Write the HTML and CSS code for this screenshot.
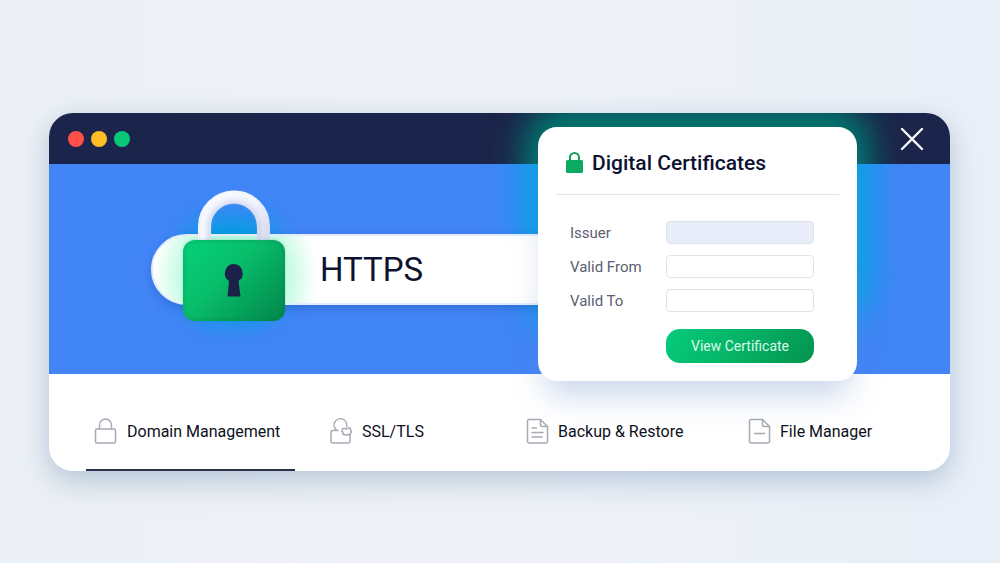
FILE: index.html
```html
<!DOCTYPE html>
<html lang="en">
<head>
    <meta charset="UTF-8">
    <meta name="viewport" content="width=device-width, initial-scale=1.0">
    <title>Digital Certificates</title>
    <link rel="stylesheet" href="styles.css">
</head>
<body>
    <main class="window">
        <header class="titlebar">
            <div class="dots">
                <span class="dot red"></span>
                <span class="dot yellow"></span>
                <span class="dot green"></span>
            </div>
            <button type="button" class="close" aria-label="Close">
                <svg width="26" height="26" viewBox="0 0 26 26" fill="none" stroke="#fff" stroke-width="2.4" stroke-linecap="round">
                    <path d="M3 3l20 20M23 3L3 23"/>
                </svg>
            </button>
        </header>

        <section class="hero">
            <div class="address">
                <input type="text" class="address-input" value="HTTPS" aria-label="Address" readonly>
                <svg class="padlock" width="104" height="132" viewBox="0 0 104 132">
                    <defs>
                        <linearGradient id="body" x1="0" y1="0.1" x2="1" y2="0.9">
                            <stop offset="0" stop-color="#05cf78"/>
                            <stop offset="0.4" stop-color="#08bf6b"/>
                            <stop offset="1" stop-color="#028a4d"/>
                        </linearGradient>
                        <linearGradient id="shackle" x1="0" y1="0" x2="1" y2="1">
                            <stop offset="0" stop-color="#f3f6ff"/>
                            <stop offset="0.6" stop-color="#e8ecfa"/>
                            <stop offset="1" stop-color="#d3d8ec"/>
                        </linearGradient>
                        <filter id="soft" x="-20%" y="-20%" width="140%" height="140%">
                            <feGaussianBlur stdDeviation="1.5"/>
                        </filter>
                    </defs>
                    <path d="M22.500 56V36.500a29.500 29.500 0 0 1 59 0V56" fill="none" stroke="url(#shackle)" stroke-width="13"/>
                    <path d="M27 52V37a25 25 0 0 1 50 0v15" fill="none" stroke="#b9c1de" stroke-width="2" opacity="0.6" filter="url(#soft)"/>
                    <path d="M20 54V36.500a32 32 0 0 1 56-22" fill="none" stroke="#fff" stroke-width="3" opacity="0.7" filter="url(#soft)"/>
                    <rect x="1" y="50" width="102" height="81" rx="12" fill="url(#body)"/>
                    <rect x="2" y="51" width="100" height="79" rx="11" fill="none" stroke="#046c43" stroke-width="1.500" opacity="0.35" filter="url(#soft)"/>
                    <path d="M13 51.500h78" stroke="#3fe59c" stroke-width="1.500" opacity="0.6" filter="url(#soft)"/>
                    <path d="M51.500 74a9.300 9.300 0 0 1 5 17l2 15.500H45.500L47 91a9.300 9.300 0 0 1 4.500-17z" fill="#1b2148"/>
                </svg>
            </div>
        </section>

        <nav class="tabs">
            <a href="#" class="tab active">
                <svg class="icon" viewBox="0 0 24 26">
                    <rect x="1.500" y="11" width="20" height="14" rx="1.500"/>
                    <path d="M5.500 11V7a6 6 0 0 1 12 0v4"/>
                </svg>
                Domain Management
            </a>
            <a href="#" class="tab">
                <svg class="icon" viewBox="0 0 24 26">
                    <path d="M9 12.500H3.500a1.500 1.500 0 0 0-1.500 1.500v9.500A1.500 1.500 0 0 0 3.500 25h16a1.500 1.500 0 0 0 1.500-1.500V17"/>
                    <path d="M7.500 12a6.300 6.300 0 1 1 10-3.500"/>
                    <path d="M14 10.500h2.500q1 1.500 2-.5h3v2.500q2 1 0 2.500v1.500h-3q-1 1.500-2.500 0H14V14q-2 0-1-1.500z"/>
                </svg>
                SSL/TLS
            </a>
            <a href="#" class="tab">
                <svg class="icon" viewBox="0 0 24 26">
                    <path d="M15.500 1.500H4A1.500 1.500 0 0 0 2.500 3v20.500A1.500 1.500 0 0 0 4 25h17a1.500 1.500 0 0 0 1.500-1.500V8.500z"/>
                    <path d="M15.500 1.500v5.500a1.500 1.500 0 0 0 1.500 1.500h5.500M7 10h4.500M7 14.500h11M7 19h10"/>
                </svg>
                Backup &amp; Restore
            </a>
            <a href="#" class="tab">
                <svg class="icon" viewBox="0 0 24 26">
                    <path d="M15.500 1.500H4A1.500 1.500 0 0 0 2.500 3v20.500A1.500 1.500 0 0 0 4 25h17a1.500 1.500 0 0 0 1.500-1.500V8.500z"/>
                    <path d="M15.500 1.500v5.500a1.500 1.500 0 0 0 1.500 1.500h5.500M7.500 15.500h10"/>
                </svg>
                File Manager
            </a>
        </nav>

        <form class="card">
            <h1 class="card-title">
                <svg width="17" height="21" viewBox="0 0 17 21">
                    <path d="M4 10V5.500a4.500 4.500 0 0 1 9 0V10" fill="none" stroke="#109e5b" stroke-width="2"/>
                    <rect y="8" width="17" height="13" rx="1.500" fill="#0aab60"/>
                </svg>
                Digital Certificates
            </h1>
            <div class="fields">
                <label for="issuer">Issuer</label>
                <input type="text" id="issuer" class="filled">
                <label for="validFrom">Valid From</label>
                <input type="text" id="validFrom">
                <label for="validTo">Valid To</label>
                <input type="text" id="validTo">
                <button type="button" class="view">View Certificate</button>
            </div>
        </form>
    </main>
</body>
</html>
```

FILE: styles.css
```css
* {
    box-sizing: border-box;
}
body {
    --card-width: 319px;
    --card-right: 93px;
    margin: 0;
    padding: 113px 50px 0 49px;
    min-height: 100vh;
    font-family: Roboto, "Liberation Sans", sans-serif;
    color: #0d1230;
    background: linear-gradient(90deg, #ebf0f4, #eef2f6 50%, #e9eff7);
}
.window {
    position: relative;
    border-radius: 24px;
    background: #fff;
    box-shadow: 0 12px 28px rgba(110, 140, 180, 0.36), 0 0 20px rgba(150, 180, 215, 0.14);
}
.titlebar {
    position: relative;
    overflow: hidden;
    display: flex;
    justify-content: space-between;
    align-items: center;
    height: 51px;
    padding: 0 25px 0 19px;
    border-radius: 24px 24px 0 0;
    background: #1b244a;
}
/* light spilling out from behind the card */
.titlebar::after,
.hero::before {
    content: "";
    position: absolute;
    right: calc(var(--card-right) - 14px);
    width: calc(var(--card-width) + 28px);
    border-radius: 40px;
}
.titlebar::after {
    top: -8px;
    height: 200px;
    background: #007a70;
    filter: blur(16px);
}
.hero::before {
    top: -100px;
    height: 260px;
    background: #00a6e4;
    filter: blur(18px);
}
.dots {
    display: flex;
    gap: 7px;
}
.dot {
    width: 16px;
    height: 16px;
    border-radius: 50%;
}
.red {
    background: #ff4f4b;
}
.yellow {
    background: #ffbe25;
}
.green {
    background: #08c877;
}
.close {
    display: flex;
    padding: 0;
    border: none;
    background: none;
    cursor: pointer;
}
.hero {
    position: relative;
    overflow: hidden;
    display: flex;
    align-items: center;
    height: 210px;
    padding: 0 380px 0 102px;
    background: #4285f7;
}
.address {
    position: relative;
    flex: 1;
}
.address::before {
    content: "";
    position: absolute;
    left: 36px;
    top: -16px;
    width: 92px;
    height: 104px;
    border-radius: 30px;
    background: #009fe0;
    filter: blur(14px);
}
.address-input {
    position: relative;
    display: block;
    width: 100%;
    height: 71px;
    padding: 0 0 0 167px;
    border: 2px solid #e3ecfd;
    border-radius: 36px 0 0 36px;
    background: radial-gradient(circle at 82px 40px, #b4fadb 46px, #fff 82px);
    box-shadow: 0 4px 10px rgba(30, 70, 160, 0.35), inset -16px 0 20px -12px rgba(190, 225, 235, 0.6);
    font-family: inherit;
    font-size: 33px;
    color: #0d1230;
}
.padlock {
    position: absolute;
    left: 31px;
    top: -44px;
}
.tabs {
    display: grid;
    grid-template-columns: 235fr 196fr 222fr 211fr;
    justify-items: start;
    height: 97px;
    padding-left: 37px;
}
.tab {
    display: flex;
    align-items: center;
    gap: 9px;
    height: 97px;
    padding: 19px 15px 0 8px;
    border-bottom: 2px solid transparent;
    font-size: 16px;
    color: #0d1020;
    text-decoration: none;
    white-space: nowrap;
}
.active {
    border-bottom-color: #2a3047;
}
.icon {
    width: 24px;
    height: 26px;
    fill: none;
    stroke: #a6abb5;
    stroke-width: 1.5;
    stroke-linecap: round;
    stroke-linejoin: round;
}
.card {
    position: absolute;
    top: 14px;
    right: var(--card-right);
    width: var(--card-width);
    padding: 0 18px 18px;
    border-radius: 19px;
    background: #fff;
    box-shadow: 0 22px 32px -8px rgba(100, 135, 195, 0.34);
}
.card-title {
    display: flex;
    align-items: center;
    gap: 9px;
    height: 68px;
    margin: 0;
    padding: 4px 0 0 10px;
    border-bottom: 1px solid #e1e3e8;
    font-size: 21px;
    font-weight: 500;
}
.fields {
    display: grid;
    grid-template-columns: 1fr 148px;
    align-items: center;
    row-gap: 11px;
    padding: 26px 25px 0 14px;
}
.fields label {
    padding-top: 1px;
    font-size: 15px;
    line-height: 22px;
    color: #5b6073;
}
.fields input {
    width: 100%;
    height: 23px;
    padding: 0 6px;
    border: 1px solid #e0e2ec;
    border-radius: 4px;
    background: #fff;
    font-family: inherit;
}
.fields .filled {
    background: #e9edf9;
}
.view {
    grid-column: 2;
    height: 34px;
    margin-top: 6px;
    padding: 0;
    border: none;
    border-radius: 14px;
    background: linear-gradient(120deg, #06cb7b, #06b567 45%, #039450);
    font-family: inherit;
    font-size: 14px;
    color: #d8fbea;
    cursor: pointer;
}
```
